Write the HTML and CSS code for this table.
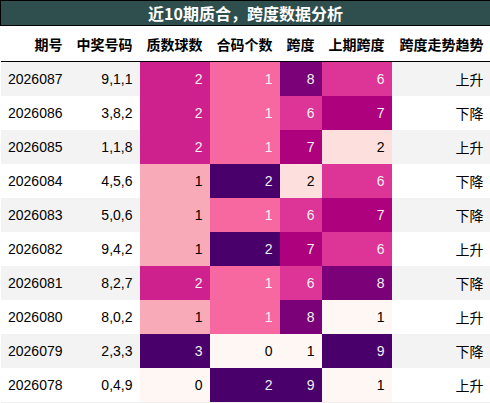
FILE: index.html
```html
<!DOCTYPE html>
<html lang="zh">

<head>
    <meta charset="UTF-8">
    <title>近10期质合，跨度数据分析</title>
    <link rel="stylesheet" href="styles.css">
</head>

<body>
    <table class="stats-table">
        <colgroup>
            <col class="col-issue">
            <col class="col-draw">
            <col class="col-wide">
            <col class="col-wide">
            <col class="col-span">
            <col class="col-wide">
            <col class="col-trend">
        </colgroup>
        <thead>
            <tr>
                <th colspan="7" class="table-title">近10期质合，跨度数据分析</th>
            </tr>
            <tr class="head-row">
                <th>期号</th>
                <th>中奖号码</th>
                <th>质数球数</th>
                <th>合码个数</th>
                <th>跨度</th>
                <th>上期跨度</th>
                <th>跨度走势趋势</th>
            </tr>
        </thead>
        <tbody>
            <tr>
                <td class="plain">2026087</td><td class="plain">9,1,1</td>
                <td class="c-p2 light">2</td><td class="c-h1 light">1</td>
                <td class="c-8 light">8</td><td class="c-6 light">6</td>
                <td class="plain cjk">上升</td>
            </tr>
            <tr>
                <td class="plain">2026086</td><td class="plain">3,8,2</td>
                <td class="c-p2 light">2</td><td class="c-h1 light">1</td>
                <td class="c-6 light">6</td><td class="c-7 light">7</td>
                <td class="plain cjk">下降</td>
            </tr>
            <tr>
                <td class="plain">2026085</td><td class="plain">1,1,8</td>
                <td class="c-p2 light">2</td><td class="c-h1 light">1</td>
                <td class="c-7 light">7</td><td class="c-2">2</td>
                <td class="plain cjk">上升</td>
            </tr>
            <tr>
                <td class="plain">2026084</td><td class="plain">4,5,6</td>
                <td class="c-p1">1</td><td class="c-max light">2</td>
                <td class="c-2">2</td><td class="c-6 light">6</td>
                <td class="plain cjk">下降</td>
            </tr>
            <tr>
                <td class="plain">2026083</td><td class="plain">5,0,6</td>
                <td class="c-p1">1</td><td class="c-h1 light">1</td>
                <td class="c-6 light">6</td><td class="c-7 light">7</td>
                <td class="plain cjk">下降</td>
            </tr>
            <tr>
                <td class="plain">2026082</td><td class="plain">9,4,2</td>
                <td class="c-p1">1</td><td class="c-max light">2</td>
                <td class="c-7 light">7</td><td class="c-6 light">6</td>
                <td class="plain cjk">上升</td>
            </tr>
            <tr>
                <td class="plain">2026081</td><td class="plain">8,2,7</td>
                <td class="c-p2 light">2</td><td class="c-h1 light">1</td>
                <td class="c-6 light">6</td><td class="c-8 light">8</td>
                <td class="plain cjk">下降</td>
            </tr>
            <tr>
                <td class="plain">2026080</td><td class="plain">8,0,2</td>
                <td class="c-p1">1</td><td class="c-h1 light">1</td>
                <td class="c-8 light">8</td><td class="c-min">1</td>
                <td class="plain cjk">上升</td>
            </tr>
            <tr>
                <td class="plain">2026079</td><td class="plain">2,3,3</td>
                <td class="c-max light">3</td><td class="c-min">0</td>
                <td class="c-min">1</td><td class="c-max light">9</td>
                <td class="plain cjk">下降</td>
            </tr>
            <tr>
                <td class="plain">2026078</td><td class="plain">0,4,9</td>
                <td class="c-min">0</td><td class="c-max light">2</td>
                <td class="c-max light">9</td><td class="c-min">1</td>
                <td class="plain cjk">上升</td>
            </tr>
        </tbody>
    </table>
</body>

</html>
```

FILE: styles.css
```css
body {
    margin: 0;
    background-color: white;
    font-family: 'Liberation Sans', 'Noto Sans CJK SC', sans-serif;
    font-size: 14px;
    color: #000;
}

.stats-table {
    width: 490px;
    table-layout: fixed;
    border-collapse: collapse;
}

.col-issue { width: 69px; }
.col-draw { width: 70px; }
.col-wide { width: 70px; }
.col-span { width: 42px; }
.col-trend { width: 99px; }

.table-title {
    height: 24px;
    padding: 0;
    background-color: #2f4f4f;
    border: 1px solid #000;
    color: white;
    font-family: 'Noto Sans CJK SC', sans-serif;
    font-size: 16px;
    font-weight: bold;
    text-align: center;
    line-height: 24px;
}

.head-row th {
    height: 35px;
    padding: 0 7px 0 0;
    border-bottom: 1px solid #000;
    font-family: 'Noto Sans CJK SC', sans-serif;
    font-size: 14px;
    font-weight: bold;
    text-align: right;
    white-space: nowrap;
}

tbody td {
    height: 34px;
    padding: 0 7px 0 0;
    text-align: right;
    line-height: 34px;
}

tbody tr:last-child td {
    border-bottom: 1px solid #eeeeee;
}

tbody tr:nth-child(odd) .plain {
    background-color: #f3f3f3;
}

.cjk {
    font-family: 'Noto Sans CJK SC', sans-serif;
}

.light { color: #f1f1f1; }

/* RdPu scale */
.c-min { background-color: #fff7f3; }
.c-2 { background-color: #fde0dd; }
.c-p1 { background-color: #f9aab8; }
.c-h1 { background-color: #f768a1; }
.c-6 { background-color: #dd3497; }
.c-p2 { background-color: #cf218d; }
.c-7 { background-color: #ae017e; }
.c-8 { background-color: #7a0177; }
.c-max { background-color: #49006a; }
```
